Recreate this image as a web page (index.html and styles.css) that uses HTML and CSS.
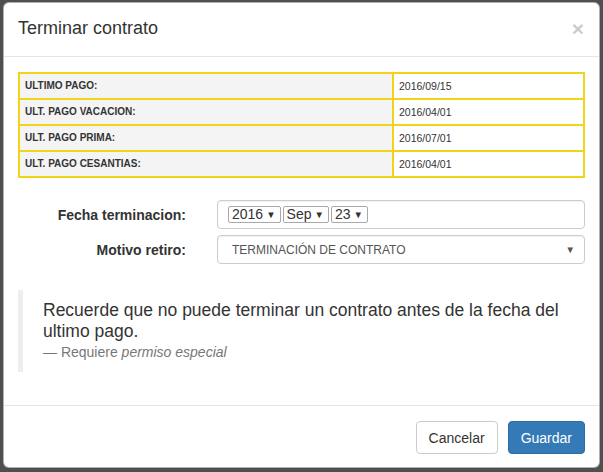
FILE: index.html
```html
<!DOCTYPE html>
<html lang="es">
<head>
<meta charset="utf-8">
<title>Terminar contrato</title>
<link rel="stylesheet" href="styles.css">
</head>
<body>
<div class="modal">
  <div class="modal-header">
    <h4 class="modal-title">Terminar contrato</h4>
    <span class="close">×</span>
  </div>
  <div class="modal-body">
    <table class="pagos">
      <tr><th>ULTIMO PAGO:</th><td>2016/09/15</td></tr>
      <tr><th>ULT. PAGO VACACION:</th><td>2016/04/01</td></tr>
      <tr><th>ULT. PAGO PRIMA:</th><td>2016/07/01</td></tr>
      <tr><th>ULT. PAGO CESANTIAS:</th><td>2016/04/01</td></tr>
    </table>
    <div class="form">
      <label class="form-label">Fecha terminacion:</label>
      <div class="form-control date-control">
        <span class="mini-select">2016 <i>▼</i></span>
        <span class="mini-select">Sep <i>▼</i></span>
        <span class="mini-select">23 <i>▼</i></span>
      </div>
      <label class="form-label">Motivo retiro:</label>
      <div class="form-control select-control">
        <span>TERMINACIÓN DE CONTRATO</span>
        <i class="caret">▼</i>
      </div>
    </div>
    <blockquote class="quote">
      <p>Recuerde que no puede terminar un contrato antes de la fecha del ultimo pago.</p>
      <footer>— Requiere <em>permiso especial</em></footer>
    </blockquote>
  </div>
  <div class="modal-footer">
    <button class="btn btn-default">Cancelar</button>
    <button class="btn btn-primary">Guardar</button>
  </div>
</div>
</body>
</html>
```
FILE: styles.css
```css
html, body {
  margin: 0;
  padding: 0;
}
body {
  background: #4f4f4f;
  font-family: "Liberation Sans", Arial, sans-serif;
  color: #333;
  height: 472px;
  overflow: hidden;
}
.modal {
  margin: 2px 3px 0 3px;
  background: #fff;
  border: 1px solid rgba(0, 0, 0, 0.3);
  border-radius: 6px;
  height: 466px;
  box-sizing: border-box;
  display: flex;
  flex-direction: column;
}
.modal-header {
  padding: 12px 14px 15px 14px;
  border-bottom: 1px solid #e5e5e5;
  display: flex;
  justify-content: space-between;
  align-items: flex-start;
}
.modal-title {
  margin: 0;
  font-size: 18px;
  font-weight: normal;
  line-height: 26px;
  color: #333;
}
.close {
  font-size: 21px;
  font-weight: bold;
  line-height: 21px;
  color: #000;
  opacity: 0.2;
  margin-top: 3px;
  margin-right: 1px;
}
.modal-body {
  padding: 15px 14px 15px 14px;
  flex: 1;
}
.pagos {
  width: 100%;
  border-collapse: collapse;
}
.pagos th, .pagos td {
  border: 2px solid #f1d417;
  padding: 4px 5px;
  line-height: 16px;
  font-size: 10px;
  text-align: left;
}
.pagos th {
  width: 362px;
  background: #f4f4f4;
  font-weight: bold;
  color: #333;
}
.pagos td {
  background: #fff;
  font-size: 10.5px;
  color: #333;
}
.form {
  margin-top: 22px;
  display: grid;
  grid-template-columns: 168px 1fr;
  column-gap: 31px;
  row-gap: 6px;
  align-items: center;
}
.form-label {
  text-align: right;
  font-weight: bold;
  font-size: 14px;
  color: #333;
}
.form-control {
  height: 29px;
  box-sizing: border-box;
  border: 1px solid #ccc;
  border-radius: 4px;
  box-shadow: inset 0 1px 1px rgba(0, 0, 0, 0.06);
  display: flex;
  align-items: center;
}
.date-control {
  padding-left: 10px;
  gap: 2px;
}
.mini-select {
  height: 17px;
  box-sizing: border-box;
  border: 1px solid #a9a9a9;
  border-radius: 2px;
  font-size: 14px;
  line-height: 15px;
  padding: 0 4px 0 3px;
  color: #333;
  display: flex;
  align-items: center;
  gap: 3px;
}
.mini-select i {
  font-style: normal;
  font-size: 9.5px;
  color: #333;
}
.select-control {
  padding: 0 9px 0 14px;
  justify-content: space-between;
  font-size: 12px;
  color: #555;
}
.caret {
  font-style: normal;
  font-size: 9.5px;
  color: #555;
}
.quote {
  margin: 26px 0 0 0;
  padding: 10px 20px 10px 20px;
  border-left: 5px solid #eee;
}
.quote p {
  margin: 0;
  font-size: 17.5px;
  line-height: 21px;
  color: #333;
}
.quote footer {
  font-size: 14px;
  line-height: 20px;
  color: #777;
}
.modal-footer {
  border-top: 1px solid #e5e5e5;
  padding: 15px 14px 13px 14px;
  display: flex;
  justify-content: flex-end;
  gap: 10px;
}
.btn {
  height: 33px;
  box-sizing: border-box;
  font-family: "Liberation Sans", Arial, sans-serif;
  font-size: 14px;
  padding: 0 12px;
  border-radius: 4px;
  border: 1px solid #ccc;
  background: #fff;
  color: #333;
}
.btn-primary {
  background: #337ab7;
  border-color: #2e6da4;
  color: #fff;
}
```
